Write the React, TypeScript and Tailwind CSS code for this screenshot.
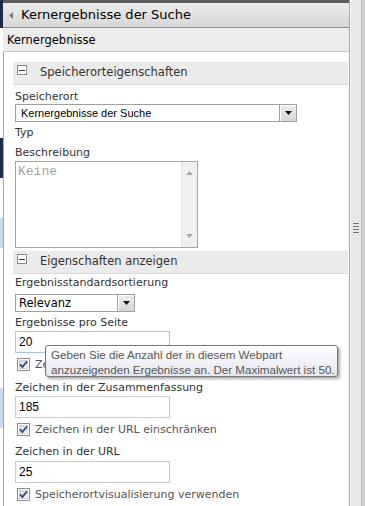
import React from "react";

const Check = () => (
  <svg width="13" height="13" viewBox="0 0 13 13" className="shrink-0">
    <defs>
      <linearGradient id="cbg" x1="0" y1="0" x2="1" y2="1">
        <stop offset="0" stopColor="#d6d6d6" />
        <stop offset="1" stopColor="#fbfbfb" />
      </linearGradient>
    </defs>
    <rect x="0.5" y="0.5" width="12" height="12" fill="#fff" stroke="#8e8f8f" />
    <rect x="2.5" y="2.5" width="8" height="8" fill="url(#cbg)" stroke="#bdbdbd" strokeWidth="0.6" />
    <path d="M3 6.3 L5.4 9 L10 3.3" fill="none" stroke="#3b4c8c" strokeWidth="1.9" />
  </svg>
);

const Minus = () => (
  <div className="w-[10px] h-[10px] border border-[#8a8a8a] bg-white flex items-center justify-center shrink-0">
    <div className="w-[6px] h-[1px] bg-[#333]" />
  </div>
);

const Section = ({ title, mt }: { title: string; mt: string }) => (
  <div className={`${mt} ml-[9px] mr-[1px] h-[23px] bg-[#ebebeb] border-b border-[#d9d9d9] flex items-start`}>
    <div className="ml-[4px] mt-[3px]">
      <Minus />
    </div>
    <div className="ml-[13px] mt-[3px] text-[11.5px] leading-[14px] text-[#333]">{title}</div>
  </div>
);

const Label = ({ children, mt }: { children: React.ReactNode; mt: string }) => (
  <div className={`${mt} text-[11px] leading-[13px] text-[#333]`}>{children}</div>
);

const Arrow = () => (
  <div className="w-[17px] h-full border-l border-[#a0a0a0] bg-[linear-gradient(#ececec,#d6d6d6)] flex items-center justify-center shadow-[inset_1px_1px_0_#fff]">
    <svg width="7" height="4" viewBox="0 0 7 4">
      <path d="M0 0H7L3.5 4Z" fill="#111" />
    </svg>
  </div>
);

const Input = ({ value, mt, border, h }: { value: string; mt: string; border: string; h: string }) => (
  <div className={`${mt} ${h} w-[155px] border ${border} bg-white flex items-center pl-[3px] text-[12px] font-['Liberation_Sans',sans-serif] text-black`}>
    {value}
  </div>
);

const CheckRow = ({ text, mt, color }: { text: string; mt: string; color: string }) => (
  <div className={`${mt} ml-[2px] flex items-center h-[13px]`}>
    <Check />
    <span className={`ml-[5px] text-[11px] leading-[13px] whitespace-nowrap ${color}`}>{text}</span>
  </div>
);

export default function App() {
  return (
    <div className="w-[365px] h-[506px] overflow-hidden flex bg-white font-['DejaVu_Sans',sans-serif] relative">
      {/* left strip (underlying page) */}
      <div className="w-[3px] flex flex-col shrink-0">
        <div className="h-[28px] bg-[#1c2c4c]" />
        <div className="h-[110px] bg-white" />
        <div className="h-[40px] bg-[#1c2c4c]" />
        <div className="h-[40px] bg-white" />
        <div className="h-[30px] bg-[#c9dcef]" />
        <div className="h-[140px] bg-white" />
        <div className="h-[40px] bg-[#c9dcef]" />
        <div className="flex-1 bg-white" />
      </div>

      {/* main tool pane */}
      <div className="w-[346px] flex flex-col shrink-0">
        <div className="h-[28px] border-t-[3px] border-t-[#5e5e5e] border-b border-b-[#8c8c8c] bg-[linear-gradient(#ececec,#d7d7d7)] flex items-center">
          <svg width="4" height="7" viewBox="0 0 4 7" className="ml-[6px]">
            <path d="M4 0V7L0 3.5Z" fill="#7a7a7a" />
          </svg>
          <span className="ml-[8px] text-[13px] leading-[16px] text-black">Kernergebnisse der Suche</span>
        </div>
        <div className="h-[24px] bg-[#ececec] border-b border-[#c4c4c4] flex items-center">
          <span className="ml-[4px] text-[11.5px] leading-[14px] text-black">Kernergebnisse</span>
        </div>

        <div className="flex-1 border-l border-[#a6a6a6] flex flex-col">
          <Section title="Speicherorteigenschaften" mt="mt-[10px]" />
          <div className="pl-[11px] flex flex-col">
            <Label mt="mt-[5px]">Speicherort</Label>
            <div className="mt-[1px] flex h-[18px] w-[282px] border border-[#a0a0a0] bg-white">
              <div className="flex-1 pl-[5px] text-[11px] leading-[16px] font-['Liberation_Sans',sans-serif] text-black">
                Kernergebnisse der Suche
              </div>
              <Arrow />
            </div>
            <Label mt="mt-[4px]">Typ</Label>
            <Label mt="mt-[7px]">Beschreibung</Label>
            <div className="mt-[2px] w-[183px] h-[87px] border border-[#a5a5a5] bg-white flex">
              <div className="flex-1 pl-[2px] pt-[2px] text-[13px] leading-[15px] font-['Liberation_Mono',monospace] text-[#a3a3a3]">
                Keine
              </div>
              <div className="w-[16px] h-full bg-[#f0f0f0] border-l border-[#e2e2e2] flex flex-col items-center justify-between py-[9px]">
                <svg width="7" height="4" viewBox="0 0 7 4">
                  <path d="M0 4H7L3.5 0Z" fill="#a8a8a8" />
                </svg>
                <svg width="7" height="4" viewBox="0 0 7 4">
                  <path d="M0 0H7L3.5 4Z" fill="#a8a8a8" />
                </svg>
              </div>
            </div>
          </div>

          <Section title="Eigenschaften anzeigen" mt="mt-[3px]" />
          <div className="pl-[11px] flex flex-col">
            <Label mt="mt-[2px]">Ergebnisstandardsortierung</Label>
            <div className="mt-[5px] flex h-[18px] w-[120px] border border-[#a0a0a0] bg-white">
              <div className="flex-1 pl-[3px] text-[11.5px] leading-[16px] text-black">Relevanz</div>
              <Arrow />
            </div>
            <Label mt="mt-[4px]">Ergebnisse pro Seite</Label>
            <Input value="20" mt="mt-[2px]" h="h-[22px]" border="border-[#a9c4e2]" />
            <CheckRow text="Zeichen in der Zusammenfassung einschränken" mt="mt-[5px]" color="text-[#555]" />
            <Label mt="mt-[10px]">Zeichen in der Zusammenfassung</Label>
            <Input value="185" mt="mt-[2px]" h="h-[22px]" border="border-[#c8ccd2]" />
            <CheckRow text="Zeichen in der URL einschränken" mt="mt-[5px]" color="text-[#555]" />
            <Label mt="mt-[9px]">Zeichen in der URL</Label>
            <Input value="25" mt="mt-[3px]" h="h-[22px]" border="border-[#c8ccd2]" />
            <CheckRow text="Speicherortvisualisierung verwenden" mt="mt-[5px]" color="text-[#555]" />
          </div>
        </div>
      </div>

      {/* right splitter */}
      <div className="flex-1 flex">
        <div className="w-[1px] bg-[#a8a8a8]" />
        <div className="w-[1px] bg-[#f8f8f8]" />
        <div className="w-[10px] bg-[#e8e8e8] flex flex-col items-center">
          <div className="mt-[223px] flex flex-col gap-[2px]">
            <div className="w-[6px] h-[1px] bg-[#777]" />
            <div className="w-[6px] h-[1px] bg-[#777]" />
            <div className="w-[6px] h-[1px] bg-[#777]" />
            <div className="w-[6px] h-[1px] bg-[#777]" />
          </div>
        </div>
        <div className="flex-1 bg-[#d2d2d2] border-l border-[#c4c4c4]" />
      </div>

      {/* tooltip */}
      <div className="absolute left-[45px] top-[345px] w-[293px] h-[32px] rounded-[3px] border border-[#767676] bg-[linear-gradient(#ffffff,#e4e5f0)] shadow-[2px_2px_3px_rgba(0,0,0,0.35)] px-[5px] pt-[1px] text-[11.6px] leading-[15px] whitespace-nowrap font-['Liberation_Sans',sans-serif] text-[#575757]">
        <div>Geben Sie die Anzahl der in diesem Webpart</div>
        <div>anzuzeigenden Ergebnisse an. Der Maximalwert ist 50.</div>
      </div>
    </div>
  );
}
